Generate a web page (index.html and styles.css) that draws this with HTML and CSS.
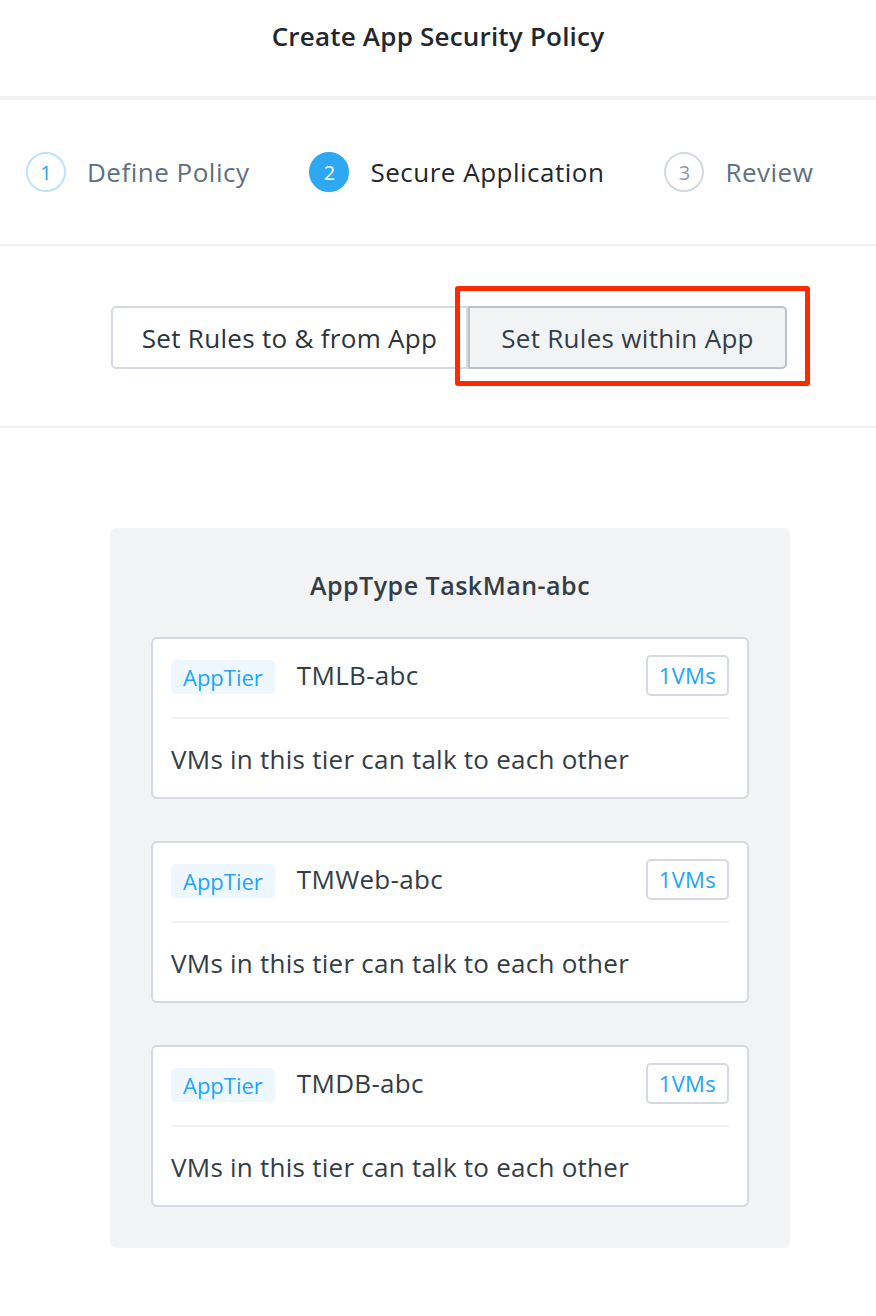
FILE: index.html
```html
<!DOCTYPE html>
<html>
<head>
<meta charset="utf-8">
<link rel="stylesheet" href="styles.css">
</head>
<body>
<div class="page">
  <header class="header">Create App Security Policy</header>
  <nav class="stepper">
    <div class="step done"><span class="circle">1</span><span class="label">Define Policy</span></div>
    <div class="step active"><span class="circle">2</span><span class="label">Secure Application</span></div>
    <div class="step todo"><span class="circle">3</span><span class="label">Review</span></div>
  </nav>
  <section class="toggle-row">
    <div class="toggle">
      <button class="tbtn">Set Rules to &amp; from App</button>
      <button class="tbtn selected">Set Rules within App</button>
      <span class="highlight"></span>
    </div>
  </section>
  <main class="content">
    <div class="panel">
      <h2 class="panel-title">AppType TaskMan-abc</h2>
      <div class="tier">
        <div class="tier-head"><span class="badge">AppTier</span><span class="tier-name">TMLB-abc</span><span class="vms">1VMs</span></div>
        <div class="tier-body">VMs in this tier can talk to each other</div>
      </div>
      <div class="tier">
        <div class="tier-head"><span class="badge">AppTier</span><span class="tier-name">TMWeb-abc</span><span class="vms">1VMs</span></div>
        <div class="tier-body">VMs in this tier can talk to each other</div>
      </div>
      <div class="tier">
        <div class="tier-head"><span class="badge">AppTier</span><span class="tier-name">TMDB-abc</span><span class="vms">1VMs</span></div>
        <div class="tier-body">VMs in this tier can talk to each other</div>
      </div>
    </div>
  </main>
</div>
</body>
</html>
```
FILE: styles.css
```css
* { box-sizing: border-box; }
html, body { margin: 0; padding: 0; background: #fff; }
body { font-family: "Open Sans", "Noto Sans", sans-serif; color: #333d47; }
.page { width: 876px; }
.header {
  height: 100px;
  padding-top: 18px;
  text-align: center;
  font-size: 26px;
  letter-spacing: 0.2px;
  font-weight: 600;
  color: #22272e;
  border-bottom: 4px solid #f2f3f5;
}
.stepper {
  height: 146px;
  display: flex;
  align-items: center;
  padding-left: 26px;
  border-bottom: 2px solid #f2f2f3;
}
.step { display: flex; align-items: center; }
.step + .step { margin-left: 60px; }
.circle {
  width: 40px; height: 40px; border-radius: 50%;
  display: flex; align-items: center; justify-content: center;
  font-size: 20px;
  border: 2px solid #bde3fb;
  color: #22a5f7;
}
.label { margin-left: 21px; font-size: 26px; letter-spacing: 0.5px; color: #5f6f83; }
.step.active .circle { background: #2ea8f2; border-color: #2ea8f2; color: #fff; }
.step.active .label { color: #22272e; }
.step.todo .circle { border-color: #d3d9e0; color: #8a99ab; }
.toggle-row {
  height: 182px;
  display: flex;
  align-items: flex-start;
  padding: 60px 0 0 111px;
  border-bottom: 2px solid #f2f2f3;
}
.toggle { position: relative; display: flex; }
.tbtn {
  height: 63px;
  font-family: inherit;
  font-size: 26px;
  letter-spacing: 0.3px;
  color: #2b333d;
  background: #fff;
  border: 2px solid #d5dae0;
  margin: 0;
  padding: 0;
  border-radius: 5px 0 0 5px;
  width: 357px;
}
.tbtn.selected {
  width: 319px;
  background: #f2f3f5;
  border-color: #b9c1cb;
  border-radius: 0 5px 5px 0;
  color: #333d47;
}
.highlight {
  position: absolute;
  left: 344px; top: -20px;
  width: 355px; height: 100px;
  border: 5px solid #ff2a00;
  border-radius: 3px;
  pointer-events: none;
}
.content { padding: 100px 0 60px 110px; }
.panel {
  width: 680px;
  background: #f2f3f5;
  border-radius: 6px;
  padding: 40px 41px 41px;
  display: flex; flex-direction: column; gap: 42px;
}
.panel-title {
  margin: 0 0 -7px;
  text-align: center;
  font-size: 25px;
  letter-spacing: 0.5px;
  font-weight: 600;
  color: #333d47;
  line-height: 34px;
}
.tier {
  background: #fff;
  border: 2px solid #d5dae0;
  border-radius: 6px;
  padding: 0 18px;
  height: 162px;
}
.tier-head {
  display: flex; align-items: center;
  height: 80px;
  padding-bottom: 6px;
  border-bottom: 2px solid #f0f1f2;
}
.badge {
  background: #eef7fe;
  color: #22a5f7;
  font-size: 22px;
  height: 34px;
  padding: 0 12px;
  display: flex; align-items: center;
  border-radius: 5px;
  margin-top: 3px;
}
.tier-name { margin-left: 22px; font-size: 26px; letter-spacing: 0.3px; color: #333d47; }
.vms {
  margin-left: auto;
  height: 41px;
  padding: 0 11px;
  border: 2px solid #d5dae0;
  border-radius: 5px;
  color: #22a5f7;
  font-size: 22px;
  letter-spacing: 0.3px;
  display: flex; align-items: center;
}
.tier-body {
  height: 80px;
  display: flex; align-items: center;
  font-size: 26px;
  letter-spacing: 0.25px;
  color: #333d47;
}
```
